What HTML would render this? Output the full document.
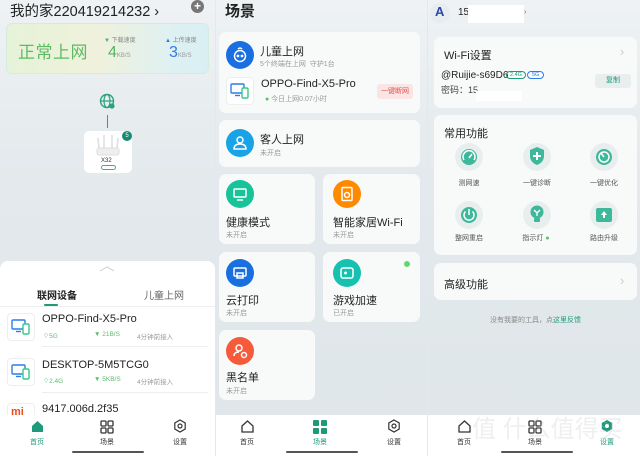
<!DOCTYPE html>
<html><head><meta charset="utf-8"><style>
*{margin:0;padding:0;box-sizing:border-box}
body{width:640px;height:456px;overflow:hidden;background:#e2e9ec;font-family:"Liberation Sans","Noto Sans CJK SC",sans-serif;color:#222;position:relative}
.a{position:absolute;white-space:nowrap}
.p{position:absolute;top:0;height:456px;overflow:hidden;background:linear-gradient(180deg,#eef2f4 0%,#e3e9ec 40%,#dfe6e9 100%)}
.card{position:absolute;background:#f8fafa;border-radius:7px}
.t{font-size:11px;color:#222}
.s{font-size:7px;color:#999}
.nav{position:absolute;left:0;right:0;top:415px;height:41px;background:#fff}
.nl{position:absolute;top:22px;font-size:7px;color:#333;transform:translateX(-50%)}
.bar{position:absolute;top:451px;height:2px;width:72px;background:#555;border-radius:1px}
.circ{position:absolute;width:28px;height:28px;border-radius:50%}
.gc{position:absolute;width:28px;height:28px;border-radius:50%;background:#e8eeee}
</style></head><body>

<!-- PANEL 1 -->
<div class="p" style="left:0;width:215px">
 <div class="a" style="left:10px;top:0px;font-size:14.5px;color:#222">我的家220419214232 ›</div>
 <div class="a" style="left:191px;top:0;width:13px;height:13px;border-radius:50%;background:#777;color:#fff;font-size:12px;line-height:12px;text-align:center;font-weight:bold">+</div>
 <div class="a" style="left:6px;top:23px;width:203px;height:51px;border-radius:6px;background:linear-gradient(90deg,#e6f3d8,#f0f1dc 45%,#dff1f1 80%,#d8eff4);border:1px solid #d6ebe0"></div>
 <div class="a" style="left:18px;top:38px;font-size:17px;color:#5dbb63;letter-spacing:0.5px">正常上网</div>
 <div class="a" style="left:104px;top:35px;font-size:6px;color:#888"><span style="color:#3ab27a">▼</span> 下载速度</div>
 <div class="a" style="left:108px;top:44px;font-size:16px;color:#4fb860">4<span style="font-size:6px;color:#999">KB/S</span></div>
 <div class="a" style="left:165px;top:35px;font-size:6px;color:#888"><span style="color:#2d7de8">▲</span> 上传速度</div>
 <div class="a" style="left:169px;top:44px;font-size:16px;color:#2d7de8">3<span style="font-size:6px;color:#999">KB/S</span></div>
 <svg class="a" style="left:99px;top:93px" width="18" height="18" viewBox="0 0 18 18"><circle cx="8" cy="8" r="6.5" fill="none" stroke="#2aa37a" stroke-width="1.4"/><ellipse cx="8" cy="8" rx="3" ry="6.5" fill="none" stroke="#2aa37a" stroke-width="1.2"/><line x1="1.5" y1="8" x2="14.5" y2="8" stroke="#2aa37a" stroke-width="1.2"/><circle cx="13" cy="13" r="2.6" fill="#2aa37a"/></svg>
 <div class="a" style="left:107px;top:115px;width:1px;height:13px;background:#2aa37a"></div>
 <div class="a" style="left:84px;top:131px;width:48px;height:42px;background:#fff;border-radius:5px"></div>
 <svg class="a" style="left:94px;top:134px" width="28" height="24" viewBox="0 0 28 24"><rect x="3" y="14" width="22" height="7" rx="2" fill="#eee" stroke="#ddd"/><g stroke="#ddd" stroke-width="1.5"><line x1="5" y1="14" x2="4" y2="4"/><line x1="10" y1="14" x2="10" y2="1"/><line x1="18" y1="14" x2="18" y2="1"/><line x1="23" y1="14" x2="24" y2="4"/></g></svg>
 <div class="a" style="left:101px;top:158px;font-size:6px;color:#333">X32</div>
 <div class="a" style="left:101px;top:165px;width:15px;height:5px;border:1px solid #3ab27a;border-radius:3px"></div>
 <div class="a" style="left:122px;top:131px;width:10px;height:10px;border-radius:50%;background:#188a72;color:#fff;font-size:6px;text-align:center;line-height:10px">5</div>

 <div class="a" style="left:0;top:261px;width:215px;height:195px;background:#fff;border-radius:8px 8px 0 0"></div>
 <svg class="a" style="left:99px;top:266px" width="16" height="6"><polyline points="1,5 8,1 15,5" fill="none" stroke="#ccc" stroke-width="1"/></svg>
 <div class="a" style="left:37px;top:287px;font-size:10px;font-weight:bold;color:#222">联网设备</div>
 <div class="a" style="left:144px;top:287px;font-size:10px;color:#666">儿童上网</div>
 <div class="a" style="left:44px;top:304px;width:14px;height:2px;background:#1e9a7a;border-radius:1px"></div>
 <div class="a" style="left:0;top:306px;width:215px;height:1px;background:#eee"></div>

 <div class="a" style="left:7px;top:313px;width:28px;height:28px;border:1px solid #eee;border-radius:4px"></div>
 <svg class="a" style="left:11px;top:318px" width="20" height="18"><rect x="1" y="2" width="13" height="9" rx="1" fill="none" stroke="#2d7de8" stroke-width="1.4"/><line x1="5" y1="13.5" x2="10" y2="13.5" stroke="#2d7de8" stroke-width="1.4"/><rect x="12" y="6" width="6" height="10" rx="1.3" fill="#fff" stroke="#3ac88a" stroke-width="1.4"/></svg>
 <div class="a t" style="left:42px;top:313px">OPPO-Find-X5-Pro</div>
 <div class="a" style="left:43px;top:331px;font-size:6.5px;color:#5bbf6a">⌔5G</div>
 <div class="a" style="left:94px;top:331px;font-size:6.5px;color:#5bbf6a">▼ 21B/S</div>
 <div class="a" style="left:137px;top:331px;font-size:6.5px;color:#999">4分钟前接入</div>
 <div class="a" style="left:42px;top:346px;width:166px;height:1px;background:#eee"></div>

 <div class="a" style="left:7px;top:358px;width:28px;height:28px;border:1px solid #eee;border-radius:4px"></div>
 <svg class="a" style="left:11px;top:363px" width="20" height="18"><rect x="1" y="2" width="13" height="9" rx="1" fill="none" stroke="#2d7de8" stroke-width="1.4"/><line x1="5" y1="13.5" x2="10" y2="13.5" stroke="#2d7de8" stroke-width="1.4"/><rect x="12" y="6" width="6" height="10" rx="1.3" fill="#fff" stroke="#3ac88a" stroke-width="1.4"/></svg>
 <div class="a t" style="left:42px;top:359px">DESKTOP-5M5TCG0</div>
 <div class="a" style="left:43px;top:376px;font-size:6.5px;color:#5bbf6a">⌔2.4G</div>
 <div class="a" style="left:94px;top:376px;font-size:6.5px;color:#5bbf6a">▼ 5KB/S</div>
 <div class="a" style="left:137px;top:376px;font-size:6.5px;color:#999">4分钟前接入</div>
 <div class="a" style="left:42px;top:392px;width:166px;height:1px;background:#eee"></div>

 <div class="a" style="left:7px;top:403px;width:28px;height:20px;border:1px solid #eee;border-radius:4px"></div>
 <div class="a" style="left:11px;top:406px;font-size:11px;color:#f04a1a;font-weight:bold">mi</div>
 <div class="a t" style="left:42px;top:403px">9417.006d.2f35</div>

 <div class="nav">
  <svg class="a" style="left:31px;top:5px" width="13" height="13"><path d="M1 6 L6.5 1 L12 6 V12 H1 Z" fill="#1e9a7a"/></svg>
  <div class="nl" style="left:37px;color:#1e9a7a">首页</div>
  <svg class="a" style="left:100px;top:5px" width="14" height="14" fill="none" stroke="#333" stroke-width="1.3"><rect x="1" y="1" width="5" height="5" rx="1"/><rect x="8" y="1" width="5" height="5" rx="1"/><rect x="1" y="8" width="5" height="5" rx="1"/><rect x="8" y="8" width="5" height="5" rx="1"/></svg>
  <div class="nl" style="left:107px">场景</div>
  <svg class="a" style="left:173px;top:4px" width="14" height="14" fill="none" stroke="#333" stroke-width="1.2"><path d="M7 1 L12.2 4 V10 L7 13 L1.8 10 V4 Z"/><circle cx="7" cy="7" r="2"/></svg>
  <div class="nl" style="left:180px">设置</div>
 </div>
 <div class="bar" style="left:72px"></div>
</div>

<!-- PANEL 2 -->
<div class="p" style="left:216px;width:211px">
 <div class="a" style="left:9px;top:0;font-size:15px;font-weight:bold">场景</div>
 <div class="card" style="left:3px;top:32px;width:201px;height:81px"></div>
 <div class="circ" style="left:10px;top:41px;background:#1a6fe0"></div>
 <svg class="a" style="left:16px;top:47px" width="16" height="16" fill="none" stroke="#fff" stroke-width="1.5"><circle cx="8" cy="9" r="5.5"/><circle cx="6" cy="9" r=".6" fill="#fff"/><circle cx="10" cy="9" r=".6" fill="#fff"/><path d="M6 2 Q8 0 10 2"/></svg>
 <div class="a t" style="left:44px;top:43px">儿童上网</div>
 <div class="a s" style="left:44px;top:59px">5个终端在上网&nbsp; 守护1台</div>
 <div class="a" style="left:10px;top:77px;width:28px;height:28px;border:1px solid #eee;border-radius:4px;background:#fff"></div>
 <svg class="a" style="left:14px;top:82px" width="20" height="18"><rect x="1" y="2" width="13" height="9" rx="1" fill="none" stroke="#2d7de8" stroke-width="1.4"/><line x1="5" y1="13.5" x2="10" y2="13.5" stroke="#2d7de8" stroke-width="1.4"/><rect x="12" y="6" width="6" height="10" rx="1.3" fill="#fff" stroke="#3ac88a" stroke-width="1.4"/></svg>
 <div class="a t" style="left:45px;top:78px">OPPO-Find-X5-Pro</div>
 <div class="a s" style="left:49px;top:94px"><span style="color:#5bbf6a">●</span> 今日上网0.07小时</div>
 <div class="a" style="left:161px;top:84px;width:36px;height:15px;background:#fbe4e4;border-radius:3px;color:#e05555;font-size:7px;text-align:center;line-height:15px">一键断网</div>

 <div class="card" style="left:3px;top:120px;width:201px;height:47px"></div>
 <div class="circ" style="left:10px;top:129px;background:#17a3e6"></div>
 <svg class="a" style="left:16px;top:135px" width="16" height="16" fill="none" stroke="#fff" stroke-width="1.5"><circle cx="8" cy="5" r="3"/><path d="M2 14 Q2 9 8 9 Q14 9 14 14 Z"/></svg>
 <div class="a t" style="left:44px;top:131px">客人上网</div>
 <div class="a s" style="left:44px;top:148px">未开启</div>

 <div class="card" style="left:3px;top:174px;width:96px;height:70px"></div>
 <div class="card" style="left:107px;top:174px;width:97px;height:70px"></div>
 <div class="circ" style="left:10px;top:180px;background:#19c39a"></div>
 <svg class="a" style="left:16px;top:186px" width="16" height="16" fill="none" stroke="#fff" stroke-width="1.5"><rect x="2" y="3" width="12" height="8" rx="1"/><line x1="5" y1="14" x2="11" y2="14"/></svg>
 <div class="a t" style="left:10px;top:214px">健康模式</div>
 <div class="a s" style="left:10px;top:230px">未开启</div>
 <div class="circ" style="left:117px;top:180px;background:#ff8a00"></div>
 <svg class="a" style="left:123px;top:186px" width="16" height="16" fill="none" stroke="#fff" stroke-width="1.5"><rect x="3" y="1.5" width="10" height="13" rx="1"/><circle cx="8" cy="9" r="2.5"/></svg>
 <div class="a t" style="left:117px;top:214px">智能家居Wi-Fi</div>
 <div class="a s" style="left:117px;top:230px">未开启</div>

 <div class="card" style="left:3px;top:252px;width:96px;height:70px"></div>
 <div class="card" style="left:107px;top:252px;width:97px;height:70px"></div>
 <div class="circ" style="left:10px;top:259px;background:#1a6fe0"></div>
 <svg class="a" style="left:16px;top:265px" width="16" height="16" fill="none" stroke="#fff" stroke-width="1.5"><rect x="2" y="3" width="12" height="8" rx="1"/><rect x="5" y="8" width="6" height="5"/></svg>
 <div class="a t" style="left:10px;top:292px">云打印</div>
 <div class="a s" style="left:10px;top:308px">未开启</div>
 <div class="circ" style="left:117px;top:259px;background:#16c1b0"></div>
 <svg class="a" style="left:123px;top:265px" width="16" height="16" fill="none" stroke="#fff" stroke-width="1.5"><rect x="2" y="3" width="12" height="10" rx="2"/><line x1="5" y1="8" x2="8" y2="8"/><line x1="6.5" y1="6.5" x2="6.5" y2="9.5"/></svg>
 <div class="a t" style="left:117px;top:292px">游戏加速</div>
 <div class="a s" style="left:117px;top:308px">已开启</div>
 <div class="a" style="left:188px;top:261px;width:6px;height:6px;border-radius:50%;background:#66d66a"></div>

 <div class="card" style="left:3px;top:330px;width:96px;height:70px"></div>
 <div class="circ" style="left:10px;top:337px;background:#f55a3a"></div>
 <svg class="a" style="left:16px;top:343px" width="16" height="16" fill="none" stroke="#fff" stroke-width="1.5"><circle cx="7" cy="5" r="3"/><path d="M2 13 Q2 9 7 9"/><circle cx="12" cy="12" r="2.5"/></svg>
 <div class="a t" style="left:10px;top:369px">黑名单</div>
 <div class="a s" style="left:10px;top:386px">未开启</div>

 <div class="nav">
  <svg class="a" style="left:25px;top:5px" width="13" height="13" fill="none" stroke="#333" stroke-width="1.3"><path d="M1 6 L6.5 1 L12 6 V12 H1 Z"/></svg>
  <div class="nl" style="left:31px">首页</div>
  <svg class="a" style="left:97px;top:5px" width="14" height="14" fill="#1e9a7a"><rect x="0" y="0" width="6" height="6" rx="1"/><rect x="8" y="0" width="6" height="6" rx="1"/><rect x="0" y="8" width="6" height="6" rx="1"/><rect x="8" y="8" width="6" height="6" rx="1"/></svg>
  <div class="nl" style="left:104px;color:#1e9a7a">场景</div>
  <svg class="a" style="left:171px;top:4px" width="14" height="14" fill="none" stroke="#333" stroke-width="1.2"><path d="M7 1 L12.2 4 V10 L7 13 L1.8 10 V4 Z"/><circle cx="7" cy="7" r="2"/></svg>
  <div class="nl" style="left:178px">设置</div>
 </div>
 <div class="bar" style="left:70px"></div>
</div>

<!-- PANEL 3 -->
<div class="p" style="left:428px;width:212px">
 <div class="a" style="left:2px;top:3px;width:20px;height:20px;border-radius:50%;background:#e6ecef"></div>
 <div class="a" style="left:7px;top:4px;font-size:13px;font-weight:bold;color:#2a4aa8">A</div>
 <div class="a" style="left:30px;top:7px;font-size:10px">15</div>
 <div class="a" style="left:40px;top:5px;width:56px;height:18px;background:#fff"></div>
 <div class="a" style="left:96px;top:9px;font-size:7px;color:#666">›</div>

 <div class="card" style="left:6px;top:37px;width:203px;height:71px"></div>
 <div class="a t" style="left:16px;top:47px">Wi-Fi设置</div>
 <div class="a" style="left:192px;top:44px;font-size:13px;color:#ccc">›</div>
 <div class="a" style="left:13px;top:70px;font-size:10px">@Ruijie-s69D6</div>
 <div class="a" style="left:78px;top:71px;font-size:5.5px;color:#1e9a7a;border:1px solid #1e9a7a;border-radius:4px;padding:0 3px;line-height:6px">2.4G</div>
 <div class="a" style="left:99px;top:71px;font-size:5.5px;color:#2d7de8;border:1px solid #2d7de8;border-radius:4px;padding:0 4px;line-height:6px">5G</div>
 <div class="a" style="left:13px;top:83px;font-size:9px;color:#444">密码：15</div>
 <div class="a" style="left:48px;top:91px;width:46px;height:10px;background:#fff"></div>
 <div class="a" style="left:167px;top:74px;width:36px;height:14px;background:#e8eded;border-radius:3px;color:#1e9a7a;font-size:7px;text-align:center;line-height:14px">复制</div>

 <div class="card" style="left:6px;top:115px;width:203px;height:140px"></div>
 <div class="a t" style="left:16px;top:125px">常用功能</div>
 <div class="gc" style="left:27px;top:143px"></div>
 <div class="gc" style="left:95px;top:143px"></div>
 <div class="gc" style="left:162px;top:143px"></div>
 <div class="gc" style="left:27px;top:201px"></div>
 <div class="gc" style="left:95px;top:201px"></div>
 <div class="gc" style="left:162px;top:201px"></div>
 <svg class="a" style="left:31px;top:147px" width="20" height="20"><circle cx="10" cy="10" r="8" fill="#3db89a"/><path d="M5 13 A6 6 0 1 1 15 13" fill="none" stroke="#fff" stroke-width="1.5"/><line x1="10" y1="11" x2="13" y2="7" stroke="#fff" stroke-width="1.5"/></svg>
 <svg class="a" style="left:99px;top:146px" width="20" height="20"><path d="M10 1 L17 4 V10 Q17 16 10 19 Q3 16 3 10 V4 Z" fill="#3db89a"/><path d="M10 6 V14 M6 10 H14" stroke="#fff" stroke-width="2"/></svg>
 <svg class="a" style="left:166px;top:147px" width="20" height="20"><circle cx="10" cy="10" r="8" fill="#3db89a"/><circle cx="10" cy="10" r="5" fill="none" stroke="#fff" stroke-width="1.5"/><line x1="10" y1="10" x2="7" y2="6" stroke="#fff" stroke-width="1.5"/></svg>
 <svg class="a" style="left:31px;top:205px" width="20" height="20"><circle cx="10" cy="10" r="8" fill="#3db89a"/><path d="M6.5 6.5 A5 5 0 1 0 13.5 6.5" fill="none" stroke="#fff" stroke-width="1.5"/><line x1="10" y1="4" x2="10" y2="10" stroke="#fff" stroke-width="1.5"/></svg>
 <svg class="a" style="left:99px;top:204px" width="20" height="20"><circle cx="10" cy="8" r="6.5" fill="#3db89a"/><rect x="7" y="14" width="6" height="4" rx="1" fill="#3db89a"/><path d="M7 6 L10 9 L13 6 M10 9 V12" stroke="#fff" stroke-width="1.3" fill="none"/></svg>
 <svg class="a" style="left:166px;top:205px" width="20" height="20"><rect x="2" y="3" width="16" height="14" rx="2" fill="#3db89a"/><path d="M10 6 L13 10 H11 V13 H9 V10 H7 Z" fill="#fff"/></svg>
 <div class="a s" style="left:41px;top:178px;font-size:7px;color:#555;transform:translateX(-50%)">测网速</div>
 <div class="a s" style="left:109px;top:178px;font-size:7px;color:#555;transform:translateX(-50%)">一键诊断</div>
 <div class="a s" style="left:176px;top:178px;font-size:7px;color:#555;transform:translateX(-50%)">一键优化</div>
 <div class="a s" style="left:41px;top:233px;font-size:7px;color:#555;transform:translateX(-50%)">整网重启</div>
 <div class="a s" style="left:108px;top:233px;font-size:7px;color:#555;transform:translateX(-50%)">指示灯 <span style="color:#5bbf6a">●</span></div>
 <div class="a s" style="left:176px;top:233px;font-size:7px;color:#555;transform:translateX(-50%)">路由升级</div>

 <div class="card" style="left:6px;top:263px;width:203px;height:37px"></div>
 <div class="a t" style="left:16px;top:276px">高级功能</div>
 <div class="a" style="left:192px;top:273px;font-size:13px;color:#ccc">›</div>
 <div class="a" style="left:62px;top:315px;font-size:7px;color:#888">没有我要的工具，点<span style="color:#1e9a7a">这里反馈</span></div>

 <div class="nav">
  <svg class="a" style="left:30px;top:5px" width="13" height="13" fill="none" stroke="#333" stroke-width="1.3"><path d="M1 6 L6.5 1 L12 6 V12 H1 Z"/></svg>
  <div class="nl" style="left:36px">首页</div>
  <svg class="a" style="left:100px;top:5px" width="14" height="14" fill="none" stroke="#333" stroke-width="1.3"><rect x="1" y="1" width="5" height="5" rx="1"/><rect x="8" y="1" width="5" height="5" rx="1"/><rect x="1" y="8" width="5" height="5" rx="1"/><rect x="8" y="8" width="5" height="5" rx="1"/></svg>
  <div class="nl" style="left:107px">场景</div>
  <svg class="a" style="left:172px;top:4px" width="14" height="14" fill="#1e9a7a"><path d="M7 1 L12.2 4 V10 L7 13 L1.8 10 V4 Z"/><circle cx="7" cy="7" r="2" fill="#fff"/></svg>
  <div class="nl" style="left:179px;color:#1e9a7a">设置</div>
  <div class="a" style="left:44px;top:-6px;font-size:24px;color:rgba(190,190,190,0.25)">值 什么值得买</div>
 </div>
 <div class="bar" style="left:73px"></div>
</div>
</body></html>
